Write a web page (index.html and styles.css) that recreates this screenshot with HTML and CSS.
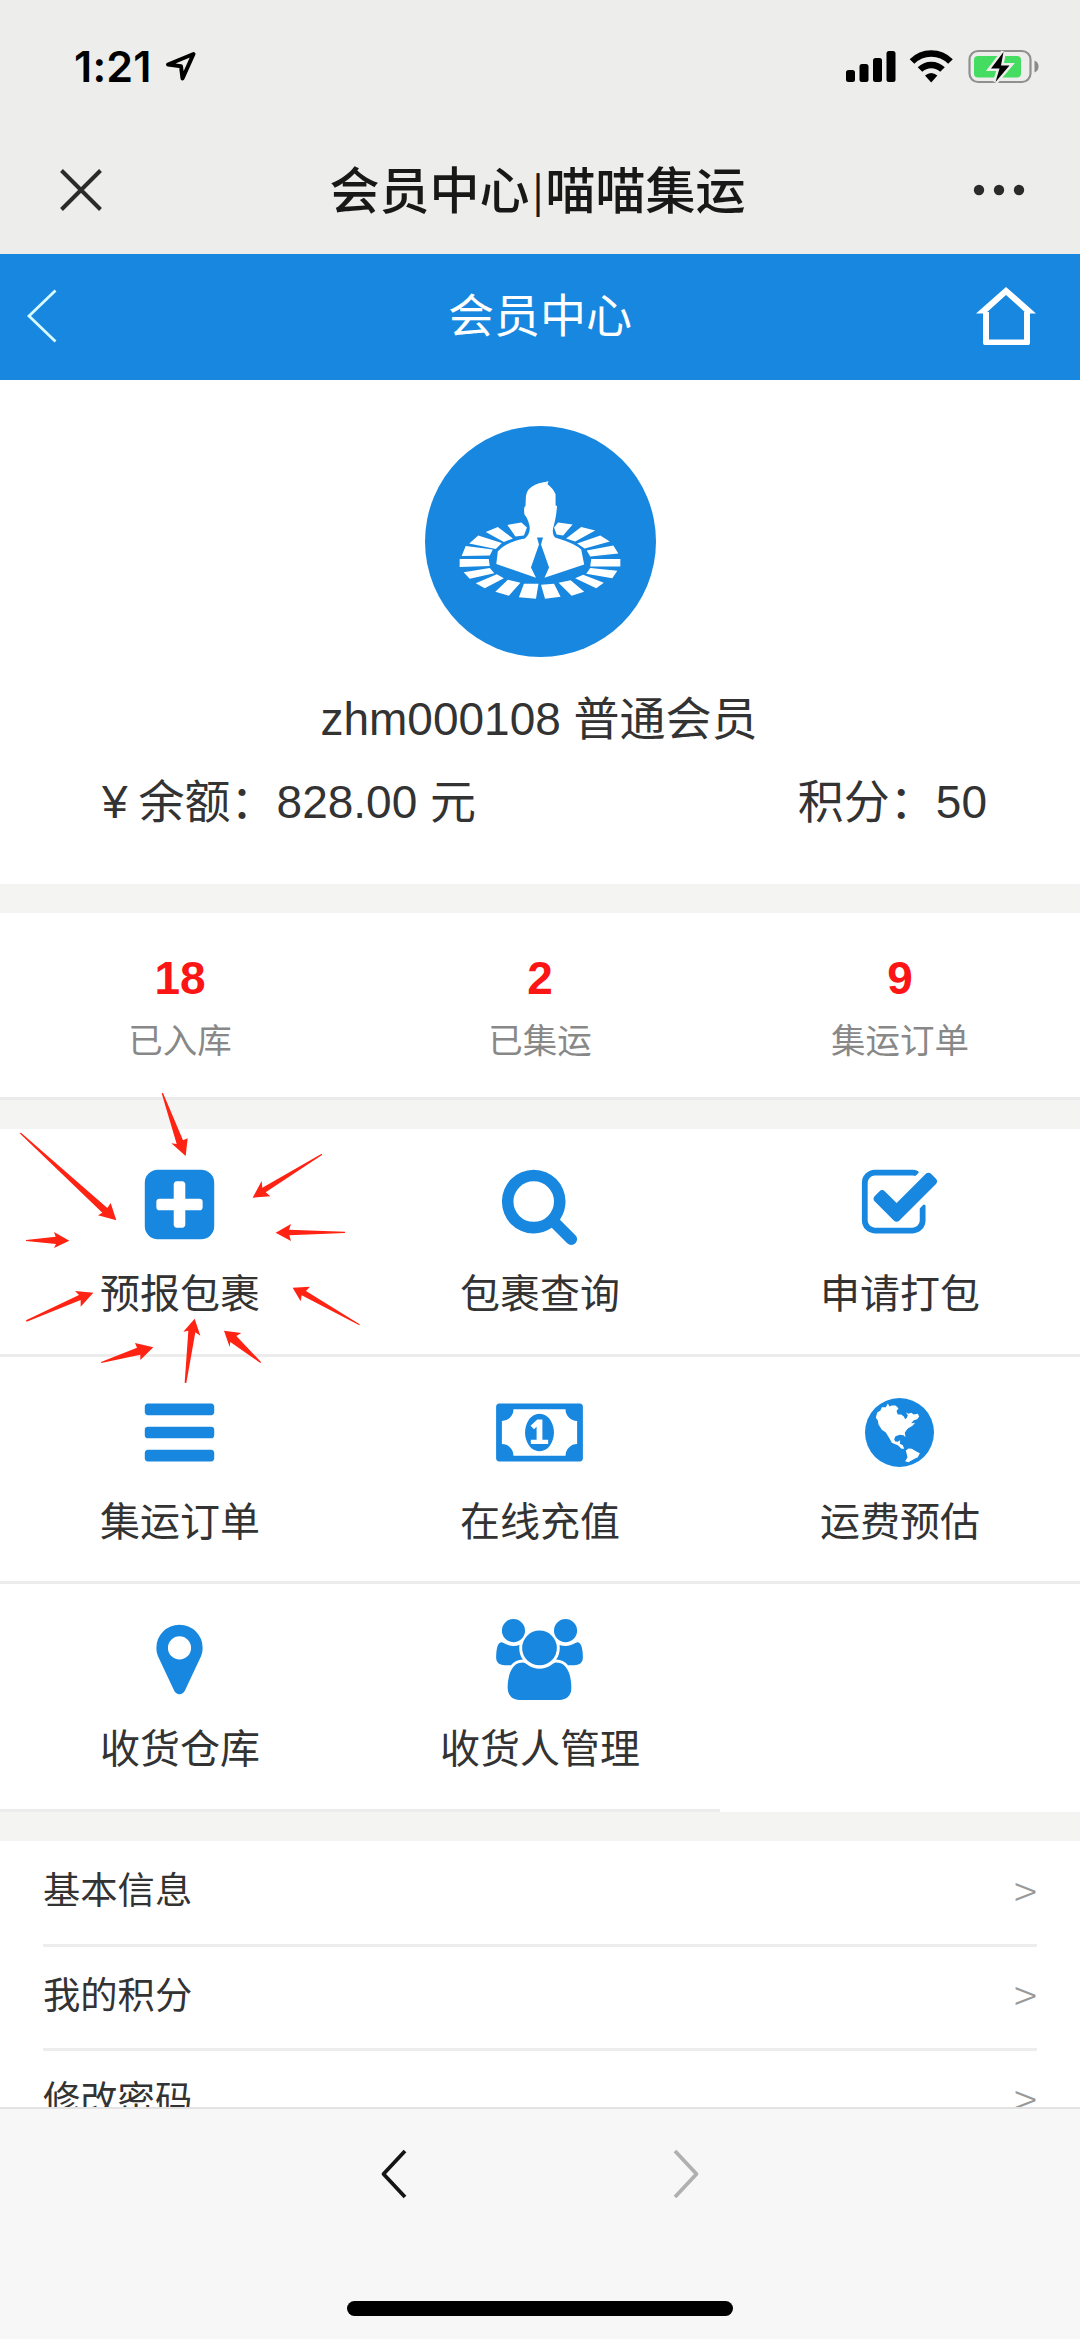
FILE: index.html
```html
<!DOCTYPE html>
<html lang="zh-CN">
<head>
<meta charset="utf-8">
<title>会员中心|喵喵集运</title>
<link rel="stylesheet" href="styles.css">
</head>
<body>
<div class="screen">
  <header class="chrome">
    <div class="status">
      <div class="clock"><span>1:21</span>
        <svg class="locate" viewBox="0 0 32 32" width="32" height="32"><path d="M28.500 4 3 14.500l13 1.800L17.500 28.500Z" fill="none" stroke="#000" stroke-width="4" stroke-linejoin="round"/></svg>
      </div>
      <svg class="indicators" viewBox="0 0 194 36" width="194" height="36">
        <g fill="#000"><rect x="1" y="22" width="9" height="12" rx="2.500"/><rect x="14.500" y="16" width="9" height="18" rx="2.500"/><rect x="28" y="10" width="9" height="24" rx="2.500"/><rect x="41.500" y="3" width="9" height="31" rx="2.500"/></g>
        <g fill="none" stroke="#000" stroke-width="6.500"><path d="M67 13.500a27 27 0 0 1 38.500 0"/><path d="M75 21.500a16 16 0 0 1 22.500 0"/></g>
        <path d="M80 27.500q6.200-5 12.400 0L86.200 34.500Z"/>
        <rect x="124.500" y="3" width="61" height="31" rx="8.500" fill="none" stroke="#909090" stroke-width="2.200"/>
        <rect x="129" y="8" width="47" height="21.500" rx="4" fill="#45dc62"/>
        <path d="M189.500 12.500q4 1.500 4 6t-4 6Z" fill="#8a8a8a"/>
        <path d="M158.500 4 146 20.500h8.500L150.500 34l14-16.500H156Z" fill="#000" stroke="#ededec" stroke-width="5" paint-order="stroke"/>
      </svg>
    </div>
    <div class="titlebar">
      <svg class="close" viewBox="0 0 42 42" width="42" height="42"><path d="M1.500 1.500l39 39M40.500 1.500l-39 39" stroke="#2b2b2b" stroke-width="4"/></svg>
      <h1>会员中心<span class="bar">|</span>喵喵集运</h1>
      <svg class="more" viewBox="0 0 52 12" width="52" height="12"><g fill="#2b2b2b"><circle cx="6" cy="6" r="5.200"/><circle cx="26" cy="6" r="5.200"/><circle cx="46" cy="6" r="5.200"/></g></svg>
    </div>
  </header>

  <nav class="pagebar">
    <svg class="back" viewBox="0 0 32 54" width="32" height="54"><path d="M29.500 1.500 3 27l26.500 25.500" fill="none" stroke="#d8fbff" stroke-width="2.800"/></svg>
    <h2>会员中心</h2>
    <svg viewBox="0 0 60 58" width="60" height="58"><path d="M10 25v30.500h41V25" fill="none" stroke="#fff" stroke-width="6" stroke-linejoin="round"/><path d="M0 26.500 30 0 60 26.500H50.500L30 8 9.500 26.500Z" fill="#fff"/></svg>
  </nav>

  <section class="profile">
    <svg class="avatar" viewBox="0 0 230 230" width="231" height="231">
      <circle cx="115" cy="115" r="115" fill="#1787e0"/>
      <g fill="#fff" transform="translate(-25.500 -26)">
        <path d="M107.500 124.500 121.500 122 127 127 124 135 115.500 136Z"/>
        <path d="M86 131.500 98 126.500 113 138 104 141.500ZM69.500 143 78.500 135 102 142.500 96 148.500ZM62 155.500 66 145.500 93 149 90 155ZM60 166.500V158.500H89L90 165.500ZM64 171.500 90 167.500 94.500 172.500 70 178ZM76 182.500 97 173.500 104 177.500 85 187.500ZM95.500 191 108 179 120.500 182 109 195ZM119 196.500 124 183H138.500L136 198Z"/>
        <path d="M172.500 124 158 122 154 127 156.500 134 163 135ZM181 126.500 195 130 175 141 166 138ZM200 135 209.500 141 184.500 148 177 143ZM213 145 218 153 190 156 186.500 150ZM220 158.500V166H190L191 158.500ZM217 170 212 177.500 186 173 190 167.500ZM203.500 182 196 187.500 175 177.500 183 174ZM184 191 171.500 195 158.500 182 170.500 179.500ZM160.500 196 145 198 141 184 154 183Z"/>
        <path d="M148.500 81Q127 84 126 96L125.500 106Q123.500 106 124.500 114Q128 118 129.500 125Q131 133 125 138Q105 142 98 151L96.500 163.500L136 177L131 167L139 144L137 137H143L141 144L149 167L144.500 177L184 164L181 149Q175 143 155 137Q151 133 154 124Q156 117 157 106L155.500 105V94Q153 88 147.500 84Z"/>
      </g>
    </svg>
    <p class="name">zhm000108 普通会员</p>
    <div class="balance"><span><i class="yen">¥</i>余额：828.00 元</span><span>积分：50</span></div>
  </section>

  <section class="stats">
    <div><b>18</b><span>已入库</span></div>
    <div><b>2</b><span>已集运</span></div>
    <div><b>9</b><span>集运订单</span></div>
  </section>

  <section class="menu">
    <a class="tile"><svg viewBox="0 0 1792 1792"><path d="M1408 960v-128q0-26-19-45t-45-19h-320v-320q0-26-19-45t-45-19h-128q-26 0-45 19t-19 45v320h-320q-26 0-45 19t-19 45v128q0 26 19 45t45 19h320v320q0 26 19 45t45 19h128q26 0 45-19t19-45v-320h320q26 0 45-19t19-45zm256-544v960q0 119-84.500 203.500t-203.500 84.500h-960q-119 0-203.500-84.500t-84.500-203.500v-960q0-119 84.500-203.500t203.500-84.500h960q119 0 203.500 84.500t84.500 203.500z"/></svg><span>预报包裹</span></a>
    <a class="tile"><svg viewBox="0 0 1792 1792"><path d="M1216 832q0-185-131.500-316.500t-316.500-131.500-316.500 131.500-131.500 316.500 131.500 316.500 316.500 131.500 316.500-131.500 131.500-316.500zm512 832q0 52-38 90t-90 38q-54 0-90-38l-343-342q-179 124-399 124-143 0-273.500-55.500t-225-150-150-225-55.500-273.500 55.500-273.500 150-225 225-150 273.500-55.500 273.500 55.500 225 150 150 225 55.500 273.500q0 220-124 399l343 343q37 37 37 90z"/></svg><span>包裹查询</span></a>
    <a class="tile"><svg viewBox="0 0 1792 1792"><path d="M1472 930v318q0 119-84.500 203.500t-203.500 84.500h-832q-119 0-203.500-84.500t-84.500-203.500v-832q0-119 84.500-203.500t203.500-84.500h832q63 0 117 25 15 7 18 23 3 17-9 29l-49 49q-10 10-23 10-3 0-9-2-23-6-45-6h-832q-66 0-113 47t-47 113v832q0 66 47 113t113 47h832q66 0 113-47t47-113v-254q0-13 9-22l64-64q10-10 23-10 6 0 12 3 20 8 20 29zm231-489l-814 814q-24 24-57 24t-57-24l-430-430q-24-24-24-57t24-57l110-110q24-24 57-24t57 24l263 263 647-647q24-24 57-24t57 24l110 110q24 24 24 57t-24 57z"/></svg><span>申请打包</span></a>
    <a class="tile"><svg viewBox="0 0 1792 1792"><path d="M1664 1344v128q0 26-19 45t-45 19h-1408q-26 0-45-19t-19-45v-128q0-26 19-45t45-19h1408q26 0 45 19t19 45zm0-512v128q0 26-19 45t-45 19h-1408q-26 0-45-19t-19-45v-128q0-26 19-45t45-19h1408q26 0 45 19t19 45zm0-512v128q0 26-19 45t-45 19h-1408q-26 0-45-19t-19-45v-128q0-26 19-45t45-19h1408q26 0 45 19t19 45z"/></svg><span>集运订单</span></a>
    <a class="tile"><svg viewBox="-64 0 1920 1792" class="wide"><path d="M704 1152h384v-96h-128v-448h-114l-148 137 77 80q42-37 55-57h2v288h-128v96zm512-256q0 70-21 142t-59.500 134-101.500 101-138 39-138-39-101.500-101-59.500-134-21-142 21-142 59.500-134 101.500-101 138-39 138 39 101.500 101 59.500 134 21 142zm512 256v-512q-106 0-181-75t-75-181h-1152q0 106-75 181t-181 75v512q106 0 181 75t75 181h1152q0-106 75-181t181-75zm128-832v1152q0 26-19 45t-45 19h-1792q-26 0-45-19t-19-45v-1152q0-26 19-45t45-19h1792q26 0 45 19t19 45z"/></svg><span>在线充值</span></a>
    <a class="tile"><svg viewBox="11.500 2.500 243 243"><circle cx="133" cy="124" r="103.500"/><path fill="#fff" d="M62 80 66 64 76 58 80 48 92 48 98 37 103 46 110 43 121 43 130 51 124 60 128 70 138 70 146 76 150 84 155 80 158 72 152 64 160 68 168 65 176 70 188 68 192 76 186 84 176 87 168 96 180 95 172 104 158 112 149 124 151 138 145 132 134 131 121 135 117 144 120 151 128 152 135 147 134 158 143 162 147 173 139 173 129 163 110 155 103 142 92 124 80 116 70 100 68 88ZM152 178 160 172 170 173 182 180 194 186 188 198 174 205 160 213 150 210 157 198Z"/></svg><span>运费预估</span></a>
    <a class="tile"><svg viewBox="0 0 1792 1792"><path d="M1152 640q0-106-75-181t-181-75-181 75-75 181 75 181 181 75 181-75 75-181zm256 0q0 109-33 179l-364 774q-16 33-47.500 52t-67.500 19-67.500-19-46.500-52l-365-774q-33-70-33-179 0-212 150-362t362-150 362 150 150 362z"/></svg><span>收货仓库</span></a>
    <a class="tile"><svg viewBox="-64 0 1920 1792" class="wide"><path d="M529 896q-162 5-265 128h-134q-82 0-138-40.500t-56-118.500q0-353 124-353 6 0 43.500 21t97.500 42.500 119 21.500q67 0 133-23-5 37-5 66 0 159 81 256zm1071 637q0 120-73 189.500t-194 69.500h-874q-121 0-194-69.500t-73-189.500q0-53 3.500-103.500t14-109 26.500-108.500 43-97.500 62-81 85.500-53.500 111.500-20q10 0 43 21.500t73 48 107 48 135 21.500 135-21.500 107-48 73-48 43-21.500q61 0 111.500 20t85.500 53.500 62 81 43 97.500 26.500 108.500 14 109 3.500 103.500zm-1024-1277q0 106-75 181t-181 75-181-75-75-181 75-181 181-75 181 75 75 181zm704 384q0 159-112.500 271.500t-271.500 112.500-271.500-112.500-112.500-271.500 112.500-271.500 271.500-112.500 271.500 112.500 112.500 271.500zm576 225q0 78-56 118.500t-138 40.500h-134q-103-123-265-128 81-97 81-256 0-29-5-66 66 23 133 23 59 0 119-21.500t97.500-42.500 43.500-21q124 0 124 353zm-128-609q0 106-75 181t-181 75-181-75-75-181 75-181 181-75 181 75 75 181z"/></svg><span>收货人管理</span></a>
    <svg class="arrows" viewBox="0 0 400 320" width="400" height="320" aria-hidden="true">
      <g fill="#fe2312" transform="scale(.33333)">
        <path d="M485 40 489 39 549 181 563 175 557 228 514 190 530 192Z"/>
        <path d="M59 160 63 158 322 384 332 369 349 421 294 406 307 398Z"/>
        <path d="M965 221 966 225 797 337 811 349 758 353 785 303 787 323Z"/>
        <path d="M1035 455V459L868 466 873 483 827 458 873 432 867 449Z"/>
        <path d="M78 480 167 470 162 456 208 482 162 504 168 492 78 483Z"/>
        <path d="M78 721 237 645 225 633 280 638 242 680V660L80 725Z"/>
        <path d="M303 846 411 803 405 789 460 802 421 840V824L304 849Z"/>
        <path d="M554 908 565 752 550 755 584 716 601 767 586 757 559 909Z"/>
        <path d="M783 846 781 849 691 786 689 801 672 752 724 759 709 768Z"/>
        <path d="M1079 733 1078 736 905 646 902 664 878 623 930 620 918 633Z"/>
      </g>
    </svg>
  </section>

  <section class="list">
    <div class="row"><span>基本信息</span><i>&gt;</i></div>
    <div class="row"><span>我的积分</span><i>&gt;</i></div>
    <div class="row"><span>修改密码</span><i>&gt;</i></div>
  </section>

  <footer class="toolbar">
    <div class="history">
      <svg viewBox="0 0 28 52" width="28" height="52"><path d="M25 3 3.500 26 25 49" fill="none" stroke="#151515" stroke-width="3.800" stroke-linejoin="round"/></svg>
      <svg viewBox="0 0 28 52" width="28" height="52"><path d="M3 3 24.500 26 3 49" fill="none" stroke="#b0b0b0" stroke-width="3.800" stroke-linejoin="round"/></svg>
    </div>
    <div class="home-indicator"></div>
  </footer>
</div>
</body>
</html>
```
FILE: styles.css
```css
* { box-sizing: border-box; }
body { margin: 0; background: #f4f4f3; }
h1, h2, p { margin: 0; font-weight: 400; }
i { font-style: normal; }

.screen {
  width: 1080px;
  height: 2339px;
  overflow: hidden;
  display: flex;
  flex-direction: column;
  color: #333;
  font-family: "Liberation Sans", "Noto Sans CJK SC", sans-serif;
}

.chrome { flex: none; height: 254px; background: #ededec; }
.status {
  display: flex;
  justify-content: space-between;
  align-items: center;
  height: 132px;
  padding: 0 41px 0 74px;
}
.clock {
  display: flex;
  align-items: center;
  gap: 13px;
  color: #000;
  font: 600 43px/60px Inter, sans-serif;
  letter-spacing: 0.2px;
}
.titlebar {
  display: flex;
  justify-content: space-between;
  align-items: center;
  height: 116px;
  padding: 0 55px 0 60px;
}
.titlebar h1 {
  padding-bottom: 7px;
  color: #181818;
  font-family: "Noto Sans CJK SC", sans-serif;
  font-weight: 500;
  font-size: 50px;
  line-height: 60px;
}
.bar { margin: 0 2px 0 3px; font-size: 39px; vertical-align: 3px; line-height: 1; }

.pagebar {
  flex: none;
  display: flex;
  justify-content: space-between;
  align-items: center;
  height: 126px;
  padding: 0 44px 3px;
  background: #1787e0;
  color: #fff;
}
.pagebar h2 { font-size: 46px; line-height: 60px; }
.back { margin: 0 46px 0 -18px; }

.profile {
  flex: none;
  display: flex;
  flex-direction: column;
  align-items: center;
  height: 504px;
  padding-top: 46px;
  background: #fff;
  font-size: 46px;
  line-height: 60px;
}
.name { margin: 32px 2px 0 0; }
.balance {
  display: flex;
  justify-content: space-between;
  align-self: stretch;
  margin-top: 23px;
  padding: 0 93px 0 102px;
}
.yen { margin-right: 11px; }

.stats {
  flex: none;
  display: grid;
  grid-template-columns: repeat(3, 1fr);
  height: 187px;
  margin-top: 29px;
  padding-top: 35px;
  border-bottom: 3px solid #ebebeb;
  background: #fff;
  text-align: center;
}
.stats div { display: flex; flex-direction: column; }
.stats b { color: #fb1515; font-size: 46px; line-height: 60px; }
.stats span { margin-top: 3px; color: #888; font-size: 34.500px; line-height: 60px; }

.menu {
  flex: none;
  position: relative;
  display: grid;
  grid-template-columns: repeat(3, 1fr);
  grid-auto-rows: 227.500px;
  height: 683px;
  margin-top: 29px;
  background: #fff;
}
.tile {
  display: flex;
  flex-direction: column;
  align-items: center;
  padding-top: 35px;
  border-bottom: 3px solid #ececec;
  font-size: 40px;
  line-height: 60px;
}
.tile svg { width: 81px; height: 81px; margin-right: 2px; fill: #1787e0; }
.tile .wide { width: 87px; }
.tile span { margin-top: 19px; }
.arrows { position: absolute; left: 0; top: -49px; }

.list {
  flex: none;
  height: 266px;
  margin-top: 29px;
  padding: 0 43px;
  overflow: hidden;
  background: #fff;
}
.row {
  display: flex;
  justify-content: space-between;
  align-items: center;
  height: 104px;
  border-bottom: 3px solid #ededed;
  font-size: 37.300px;
  line-height: 60px;
}
.row:first-child { height: 106px; padding-bottom: 3px; }
.row:nth-child(n+2) { padding-bottom: 4px; }
.row i { padding-bottom: 5px; color: #999; font-family: "Noto Sans CJK SC", sans-serif; font-weight: 300; font-size: 43px; }

.toolbar {
  flex: 1;
  display: flex;
  flex-direction: column;
  align-items: center;
  border-top: 2px solid #e2e2e2;
  background: #f7f7f7;
}
.history { display: flex; justify-content: space-between; width: 320px; margin-top: 39px; }
.home-indicator { width: 386px; height: 15px; margin-top: 101px; border-radius: 8px; background: #000; }
```
